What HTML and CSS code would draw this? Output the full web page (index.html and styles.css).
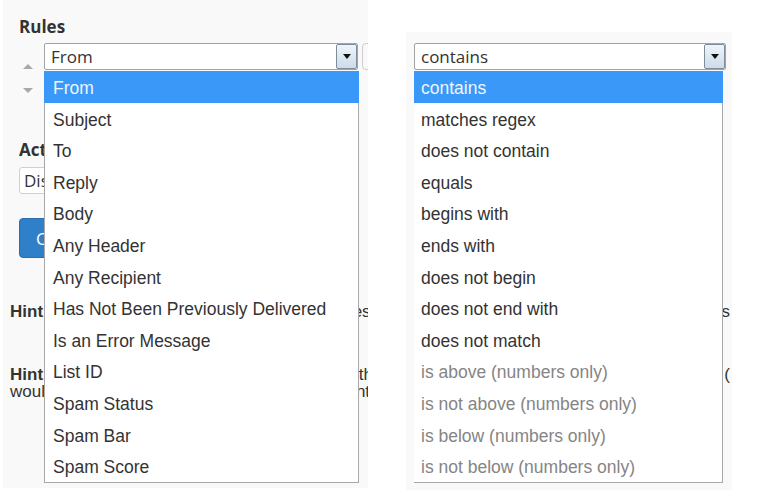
FILE: index.html
```html
<!DOCTYPE html>
<html lang="en">
<head>
<meta charset="utf-8">
<title>Rules</title>
<link rel="stylesheet" href="styles.css">
</head>
<body>
<div class="canvas">
  <section class="panel panel-left">
    <h2 class="heading">Rules</h2>
    <div class="rule-row">
      <div class="order"><span class="tri tri-up"></span><span class="tri tri-down"></span></div>
      <div class="select sel-field"><span class="sel-value">From</span><span class="sel-btn"><span class="caret"></span></span></div>
      <div class="select sel-next"></div>
    </div>
    <h2 class="heading heading-act">Actions</h2>
    <div class="select sel-action"><span class="sel-value sel-value-action">Discard Message</span></div>
    <button class="btn" type="button">Create</button>
    <p class="hint hint-one"><b>Hint:</b> The filter is applied to every incoming message as it arrives.</p>
    <p class="hint hint-two"><b>Hint:</b> Rules are tested in order, so a message that passes the first<br>would then be checked against the next rule until it is delivered.</p>
    <ul class="dropdown dd-left">
      <li class="opt opt-active">From</li>
      <li class="opt">Subject</li>
      <li class="opt">To</li>
      <li class="opt">Reply</li>
      <li class="opt">Body</li>
      <li class="opt">Any Header</li>
      <li class="opt">Any Recipient</li>
      <li class="opt">Has Not Been Previously Delivered</li>
      <li class="opt">Is an Error Message</li>
      <li class="opt">List ID</li>
      <li class="opt">Spam Status</li>
      <li class="opt">Spam Bar</li>
      <li class="opt">Spam Score</li>
    </ul>
  </section>
  <section class="panel panel-right">
    <div class="select sel-op"><span class="sel-value">contains</span><span class="sel-btn"><span class="caret"></span></span></div>
    <div class="bg-lines">
      <p class="bg-line">messages</p>
      <p class="bg-line bg-line-two">value (</p>
    </div>
    <ul class="dropdown dd-right">
      <li class="opt opt-active">contains</li>
      <li class="opt">matches regex</li>
      <li class="opt">does not contain</li>
      <li class="opt">equals</li>
      <li class="opt">begins with</li>
      <li class="opt">ends with</li>
      <li class="opt">does not begin</li>
      <li class="opt">does not end with</li>
      <li class="opt">does not match</li>
      <li class="opt opt-muted">is above (numbers only)</li>
      <li class="opt opt-muted">is not above (numbers only)</li>
      <li class="opt opt-muted">is below (numbers only)</li>
      <li class="opt opt-muted">is not below (numbers only)</li>
    </ul>
  </section>
</div>
</body>
</html>
```

FILE: styles.css
```css
html, body {
  margin: 0;
  padding: 0;
  background: #ffffff;
}

body {
  width: 762px;
  height: 498px;
  overflow: hidden;
  font-family: "Open Sans", "Liberation Sans", sans-serif;
  color: #333333;
}

.canvas {
  display: flex;
  align-items: flex-start;
}

.panel {
  position: relative;
  box-sizing: border-box;
  background: #f9f9f9;
  overflow: hidden;
  flex-shrink: 0;
}

.panel-left {
  margin-left: 3px;
  width: 365px;
  height: 488px;
  padding: 16px 0 0 16px;
}

.panel-right {
  margin-left: 38px;
  margin-top: 32px;
  width: 326px;
  height: 458px;
  padding: 11px 0 0 8px;
}

.heading {
  margin: 0 0 5px 0;
  font-size: 17px;
  line-height: 22px;
  font-weight: 700;
  color: #333333;
}

.heading-act {
  margin-top: 46px;
  margin-bottom: 6px;
}

.rule-row {
  display: flex;
  align-items: flex-start;
}

.rule-row > * {
  flex-shrink: 0;
}

.order {
  width: 25px;
  box-sizing: border-box;
  padding: 21px 0 0 4px;
  display: flex;
  flex-direction: column;
  gap: 19px;
}

.tri {
  display: block;
  width: 0;
  height: 0;
  border-left: 5px solid transparent;
  border-right: 5px solid transparent;
}

.tri-up {
  border-bottom: 5px solid #a9a9a9;
}

.tri-down {
  border-top: 5px solid #a9a9a9;
}

.select {
  display: flex;
  align-items: center;
  box-sizing: border-box;
  height: 27px;
  border: 1px solid #a3a3a3;
  border-radius: 2px;
  background: #ffffff;
  flex-shrink: 0;
}

.sel-field {
  width: 314px;
}

.sel-op {
  width: 312px;
}

.sel-next {
  width: 120px;
  margin-left: 4px;
  border-color: #cfcfcf;
  border-radius: 4px;
  background: transparent;
}

.sel-action {
  width: 280px;
  border-color: #d0d0d0;
  border-radius: 3px;
}

.sel-value {
  flex: 1;
  padding-left: 6px;
  font-size: 17px;
  line-height: 25px;
  color: #333333;
  white-space: nowrap;
  overflow: hidden;
}

.sel-value-action {
  padding-left: 4px;
}

.sel-btn {
  display: flex;
  align-items: center;
  justify-content: center;
  box-sizing: border-box;
  flex-shrink: 0;
  width: 21px;
  height: 25px;
  border: 1px solid #7f8c99;
  border-radius: 2px;
  background: linear-gradient(#eef4fa, #cddcea);
}

.caret {
  width: 0;
  height: 0;
  border-left: 4px solid transparent;
  border-right: 4px solid transparent;
  border-top: 5px solid #111111;
}

.btn {
  display: block;
  margin-top: 24px;
  box-sizing: border-box;
  height: 40px;
  padding: 0 16px;
  border: 1px solid #2a6db0;
  border-radius: 4px;
  background: #2f7fc9;
  color: #ffffff;
  font-family: "Open Sans", "Liberation Sans", sans-serif;
  font-size: 17px;
}

.hint {
  margin: 45px 0 0 -9px;
  font-family: "Liberation Sans", Arial, sans-serif;
  font-size: 17px;
  line-height: 17px;
  color: #333333;
  white-space: nowrap;
}

.hint-two {
  margin-top: 46px;
}

.bg-lines {
  margin-top: 233px;
  width: 316px;
}

.bg-line {
  margin: 0;
  text-align: right;
  font-family: "Liberation Sans", Arial, sans-serif;
  font-size: 17px;
  line-height: 17px;
  color: #333333;
  white-space: nowrap;
}

.bg-line-two {
  margin-top: 46px;
}

.dropdown {
  position: absolute;
  top: 71px;
  margin: 0;
  padding: 0;
  list-style: none;
  box-sizing: border-box;
  background: #ffffff;
  border: 1px solid #a8a8a8;
  border-top: none;
  font-family: "Liberation Sans", Arial, sans-serif;
  font-size: 17.5px;
  color: #333333;
}

.dd-left {
  left: 41px;
  width: 315px;
}

.dd-right {
  top: 39px;
  left: 8px;
  width: 309px;
  border-left: none;
}

.opt {
  box-sizing: border-box;
  height: 31.6px;
  padding-top: 3px;
  line-height: 28.6px;
  padding-left: 8px;
  white-space: nowrap;
}

.dd-left .opt-active {
  margin-left: -1px;
  margin-right: -1px;
  padding-left: 9px;
}

.dd-right .opt {
  padding-left: 7px;
}

.dd-right .opt-active {
  margin-right: -1px;
}

.opt-active {
  background: #3a98f8;
  color: #eef6ff;
}

.opt-muted {
  color: #858585;
}
```
